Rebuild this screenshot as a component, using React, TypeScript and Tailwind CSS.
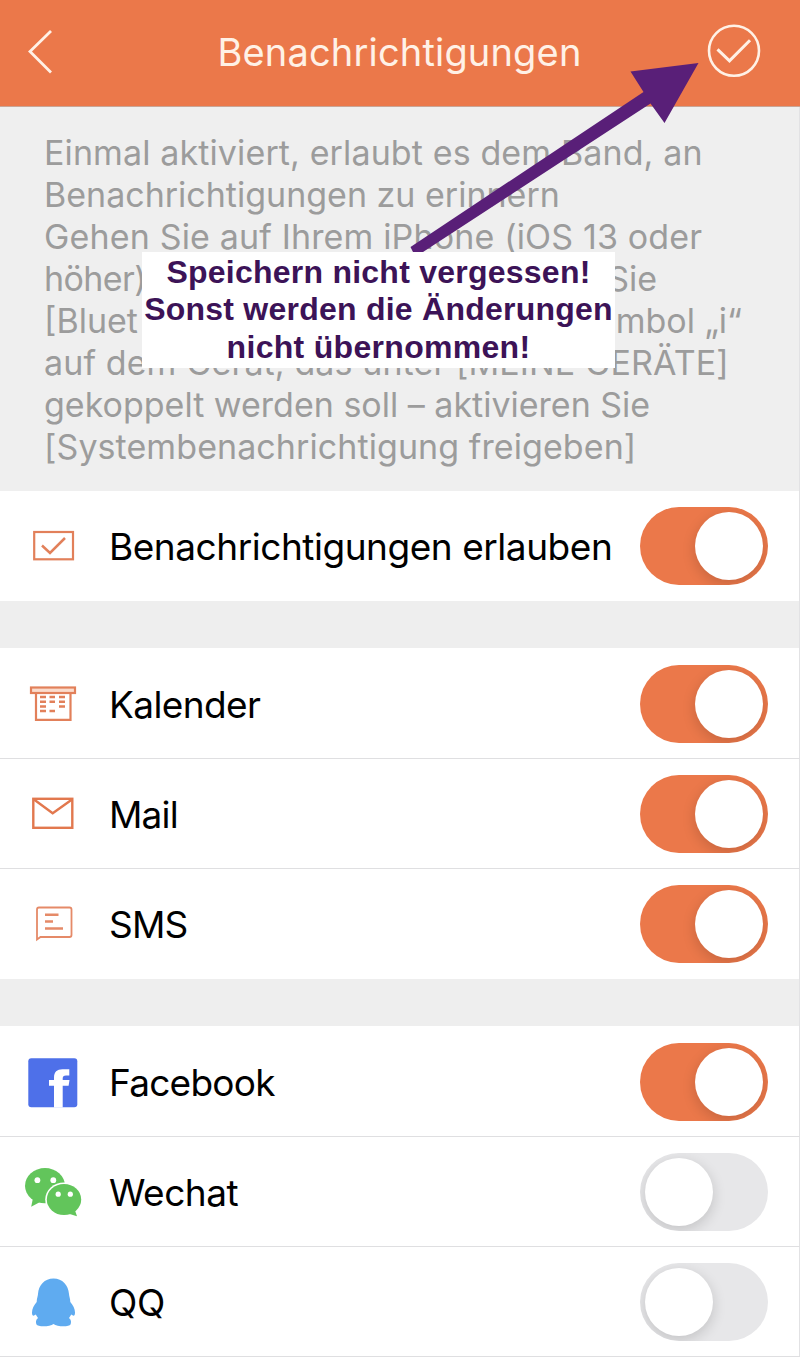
import type { ReactNode } from 'react'

function App() {
  return (
    <div className="relative h-[1368px] w-[800px] overflow-hidden bg-white font-['Inter','Liberation_Sans',sans-serif]">
      <Header />
      <InfoText />
      <Row icon={<AllowIcon />} label="Benachrichtigungen erlauben" tracking="tracking-[-0.46px]" />
      <Gap />
      <Row icon={<CalendarIcon />} label="Kalender" tracking="tracking-[-0.6px]" first />
      <Row icon={<MailIcon />} label="Mail" tracking="tracking-[-0.8px]" line />
      <Row icon={<SmsIcon />} label="SMS" tracking="tracking-[-0.8px]" line last />
      <Gap />
      <Row icon={<FacebookIcon />} label="Facebook" tracking="tracking-[-0.75px]" first />
      <Row icon={<WechatIcon />} label="Wechat" tracking="tracking-[-0.5px]" line off />
      <Row icon={<QQIcon />} label="QQ" tracking="tracking-[-0.3px]" line off />
      <div className="border-t border-[#dfdfe1]" />
      <Hint />
    </div>
  )
}

function Header() {
  return (
    <div className="flex h-[107px] items-center justify-between border-b border-[#c9a596] bg-[#eb784a] pr-[39px] pl-[26px] text-[#fff1e6]">
      <svg className="h-[46px] w-[54px]" viewBox="0 1 54 46" fill="none" stroke="currentColor" strokeWidth="2.8">
        <path d="M25 2 L4 22.5 L25 43.5" />
      </svg>
      <h1 className="pb-[2px] pl-[12px] text-[38px] tracking-[0.17px]">Benachrichtigungen</h1>
      <svg className="h-[54px] w-[54px]" viewBox="0 1.2 54 54" overflow="visible" fill="none" stroke="currentColor" strokeWidth="2.6">
        <circle cx="27" cy="26" r="25" />
        <path d="M10.5 24.5 L22.5 36 L43 15.5" strokeWidth="3" />
      </svg>
    </div>
  )
}

function InfoText() {
  return (
    <div className="h-[384px] border-r border-[#e2e2e4] bg-[#efefef] pt-[25px] pl-[44px] text-[34px] leading-[42px] whitespace-nowrap text-[#9c9c9c]">
      <div className="tracking-[0.12px]">Einmal aktiviert, erlaubt es dem Band, an</div>
      <div>Benachrichtigungen zu erinnern</div>
      <div className="tracking-[0.15px]">Gehen Sie auf Ihrem iPhone (iOS 13 oder</div>
      <div className="flex w-[613px] justify-between">
        <span className="tracking-[-0.6px]">höher)</span>
        <span>Sie</span>
      </div>
      <div className="flex w-[698px] justify-between">
        <span>[Bluet</span>
        <span>mbol „i“</span>
      </div>
      <div className="tracking-[0.1px]">auf dem Gerät, das unter [MEINE GERÄTE]</div>
      <div>gekoppelt werden soll – aktivieren Sie</div>
      <div className="tracking-[0.08px]">[Systembenachrichtigung freigeben]</div>
    </div>
  )
}

function Gap() {
  return <div className="h-[47px] border-r border-[#e2e2e4] bg-[#eeeeee]" />
}

type RowProps = {
  icon: ReactNode
  label: string
  tracking: string
  off?: boolean
  line?: boolean
  first?: boolean
  last?: boolean
}

function Row({ icon, label, tracking, off, line, first, last }: RowProps) {
  return (
    <div
      className={`flex items-center border-r border-r-[#e2e2e4] pr-[31px] pl-[23px] ${last ? 'h-[111px]' : 'h-[110px]'} ${line ? 'border-t border-t-[#dfdfe1]' : ''} ${first ? 'pt-px' : ''}`}
    >
      {icon}
      <span className={`grow pt-[2px] pl-[26px] text-[37px] whitespace-nowrap text-black ${tracking}`}>{label}</span>
      <Toggle off={off} />
    </div>
  )
}

function Toggle({ off }: { off?: boolean }) {
  return (
    <div className={`flex h-[78px] w-[128px] shrink-0 items-center overflow-hidden rounded-full px-[5px] ${off ? 'bg-[#e7e7e9]' : 'justify-end bg-[#eb784a]'}`}>
      <div className="h-[68px] w-[68px] rounded-full bg-white shadow-[0_4px_14px_rgba(0,0,0,0.16)]" />
    </div>
  )
}

// purple note with the arrow to the save button
function Hint() {
  return (
    <>
      <svg className="absolute top-[56px] left-[400px] h-[200px] w-[310px]" viewBox="400 56 310 200" fill="#591f78">
        <path d="M698.5 63 L630.5 71.5 L643.5 92 L410.5 247 L413 252 H423 L650.5 103.5 L664.5 123 Z" />
      </svg>
      <div className="absolute top-[252px] left-[142px] h-[116px] w-[473px] bg-white pt-[2px] text-center font-['Liberation_Sans',sans-serif] text-[32px] leading-[37.4px] font-bold whitespace-nowrap text-[#3c1357]">
        <div className="tracking-[0.24px]">Speichern nicht vergessen!</div>
        <div className="tracking-[0.24px]">Sonst werden die Änderungen</div>
        <div className="tracking-[0.3px]">nicht übernommen!</div>
      </div>
    </>
  )
}

function AllowIcon() {
  return (
    <svg className="h-[60px] w-[60px] shrink-0" viewBox="0 0 60 60" fill="none" stroke="#e2805a" strokeWidth="2.2">
      <rect x="11.2" y="16" width="38.8" height="27.3" />
      <path d="M19 29.5 L27 37 L42 22" strokeWidth="2.5" />
    </svg>
  )
}

function CalendarIcon() {
  return (
    <svg className="h-[60px] w-[60px] shrink-0" viewBox="0 1 60 60" fill="none" stroke="#e2805a" strokeWidth="2.2">
      <rect x="8" y="14.5" width="44" height="5.5" fill="#fbdccd" />
      <path d="M13 20 V46.8 H47.5 V20" />
      <path d="M17 24 H23 M26.5 24 H32 M36 24 H42 M17 28.7 H23 M26.5 28.7 H32 M36 28.7 H42 M17 33.5 H23 M36 33.5 H42 M17 38 H23 M26.5 38 H32" strokeWidth="2.4" />
    </svg>
  )
}

function MailIcon() {
  return (
    <svg className="h-[60px] w-[60px] shrink-0" viewBox="0 0.5 60 60" fill="none" stroke="#e2784e" strokeWidth="2.4">
      <rect x="10.3" y="15.3" width="39" height="29" />
      <path d="M11 16 L29.7 29.8 L49 16" />
    </svg>
  )
}

function SmsIcon() {
  return (
    <svg className="h-[60px] w-[60px] shrink-0" viewBox="0 0 60 60" fill="none" stroke="#e58a68" strokeWidth="1.8">
      <path d="M14 45.5 V15.5 Q14 13.5 16 13.5 H46.5 Q48.5 13.5 48.5 15.5 V41 Q48.5 43 46.5 43 H17.5 Z" />
      <path d="M22 20.8 H35.5 M22 27.5 H30 M22 34.5 H40" strokeWidth="2.4" />
    </svg>
  )
}

function FacebookIcon() {
  return (
    <svg className="h-[60px] w-[60px] shrink-0" viewBox="0 1 60 60">
      <rect x="5.3" y="7.3" width="49" height="49" rx="3" fill="#4e70e9" />
      <path
        d="M31 56.5 V34.8 H26 V29 H31 V27 C31 21 34 18.3 39.5 18.3 H46.3 V24.4 H43 C40.6 24.4 39.7 25.5 39.7 27.5 V29 H46.5 L45.6 34.8 H39.7 V56.5 Z"
        fill="white"
      />
    </svg>
  )
}

function WechatIcon() {
  return (
    <svg className="h-[60px] w-[60px] shrink-0" viewBox="0 0 60 60" fill="#62c55b">
      <ellipse cx="22" cy="23.7" rx="20" ry="17.6" />
      <path d="M10 36 L8.2 44.8 L18 39.5 Z" />
      <ellipse cx="41" cy="37.5" rx="18.8" ry="17" fill="white" />
      <ellipse cx="41" cy="37.5" rx="17.2" ry="15.4" />
      <path d="M45 51.5 L54 54.3 L51.5 47 Z" />
      <g fill="white">
        <circle cx="14.4" cy="18.2" r="2.9" />
        <circle cx="30.3" cy="18.2" r="2.9" />
        <circle cx="35.2" cy="32.2" r="2.6" />
        <circle cx="47.3" cy="32.2" r="2.6" />
      </g>
    </svg>
  )
}

function QQIcon() {
  return (
    <svg className="h-[60px] w-[60px] shrink-0" viewBox="0 0 60 60" fill="#5fabf0">
      <path d="M30.5 6.5 C39.5 6.5 45.3 13 46 22 C46 24 47.3 26.5 47.3 30 C50 33 52 37 52 40.5 C52 44 50.5 44.5 48.3 42.5 L46 46 C48.5 48 48.3 50.5 47.5 52.5 C46.5 55 34 55 30.5 52 C27 55 14.5 55 13.5 52.5 C12.7 50.5 12.5 48 15 46 L12.7 42.5 C10.5 44.5 9 44 9 40.5 C9 37 11 33 13.7 30 C13.7 26.5 15 24 15 22 C15.7 13 21.5 6.5 30.5 6.5 Z" />
    </svg>
  )
}

export default App
